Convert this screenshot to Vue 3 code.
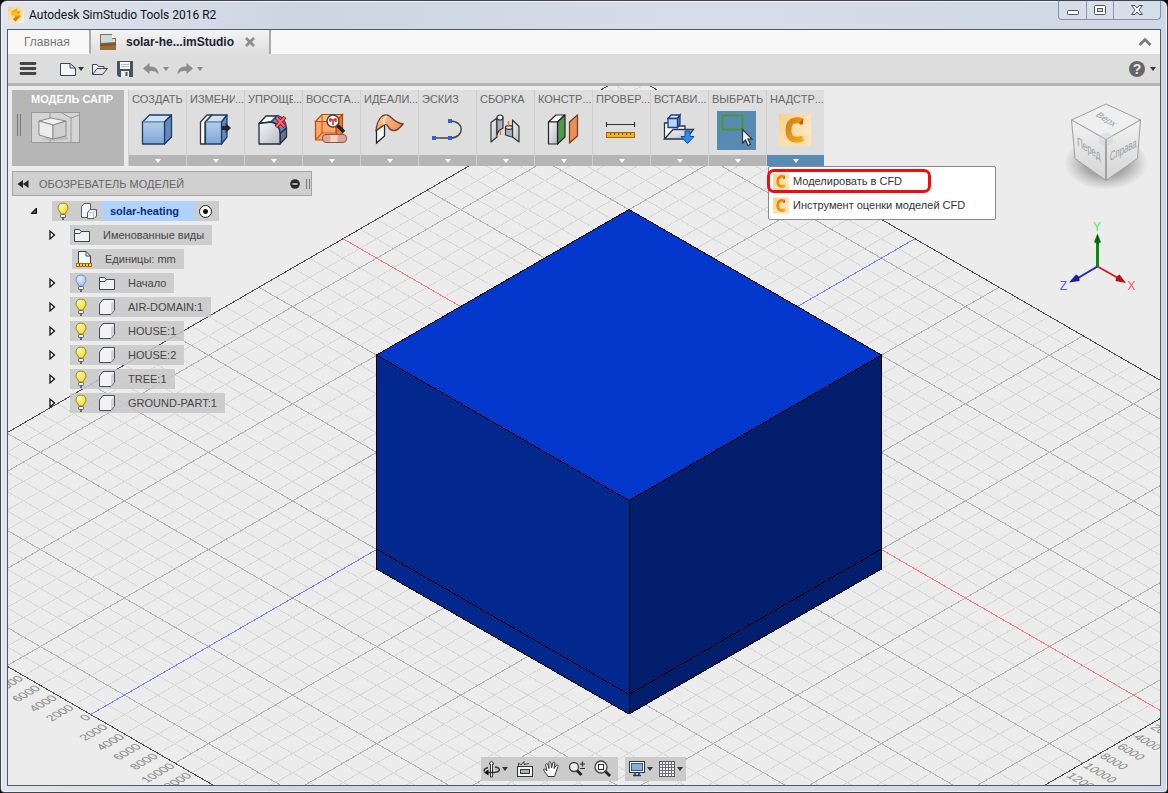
<template>
  <div class="window">
    <svg class="defs" width="0" height="0" aria-hidden="true">
      <defs>
        <linearGradient id="gBlue" x1="0" y1="0" x2="0" y2="1">
          <stop offset="0" stop-color="#b4cdea" />
          <stop offset="1" stop-color="#7fa7d8" />
        </linearGradient>
        <linearGradient id="gGrey" x1="0" y1="0" x2="1" y2="1">
          <stop offset="0" stop-color="#f6f7f9" />
          <stop offset="1" stop-color="#b4bac6" />
        </linearGradient>
        <linearGradient id="gOrange" x1="0" y1="0" x2="1" y2="1">
          <stop offset="0" stop-color="#ffc79c" />
          <stop offset="1" stop-color="#e98d55" />
        </linearGradient>
        <linearGradient id="gCfd" x1="0" y1="0" x2="1" y2="1">
          <stop offset="0" stop-color="#fbcf83" />
          <stop offset="1" stop-color="#fdf1dc" />
        </linearGradient>
        <linearGradient id="gC" x1="0" y1="0" x2="1" y2="1">
          <stop offset="0" stop-color="#d98218" />
          <stop offset="1" stop-color="#fba51c" />
        </linearGradient>
        <radialGradient id="gBulb" cx="40%" cy="35%">
          <stop offset="0" stop-color="#fffbd0" />
          <stop offset="1" stop-color="#ffe02e" />
        </radialGradient>
        <radialGradient id="gBulbOff" cx="40%" cy="35%">
          <stop offset="0" stop-color="#f2f7ff" />
          <stop offset="1" stop-color="#a9c8fa" />
        </radialGradient>
      </defs>
    </svg>

    <header class="titlebar">
      <svg class="logo" viewBox="0 0 16 16" v-html="icons.logo" />
      <h1>Autodesk SimStudio Tools 2016 R2</h1>
      <div class="winbtns">
        <button aria-label="Свернуть"><svg viewBox="0 0 14 14" v-html="icons.min" /></button>
        <button aria-label="Развернуть"><svg viewBox="0 0 14 14" v-html="icons.max" /></button>
        <button class="close" aria-label="Закрыть"><svg viewBox="0 0 14 14" v-html="icons.close" /></button>
      </div>
    </header>

    <div class="client">
      <nav class="tabs">
        <button class="tab">Главная</button>
        <div class="tab active">
          <svg class="doc" viewBox="0 0 16 16" v-html="icons.thumb" />
          <button class="name">solar-he...imStudio</button>
          <button class="x" aria-label="Закрыть вкладку"><svg viewBox="0 0 10 10"><path d="M1 1L9 9M9 1L1 9" stroke="#8b8b8b" stroke-width="2.6" /></svg></button>
        </div>
        <button class="collapse" aria-label="Скрыть ленту"><svg viewBox="0 0 14 10"><path d="M1.500 8L7 2.500L12.500 8" fill="none" stroke="#777" stroke-width="2.600" /></svg></button>
      </nav>

      <div class="quick">
        <button class="burger" aria-label="Меню"><svg viewBox="0 0 18 14"><path d="M2 1.500H16M2 6.500H16M2 11.500H16" stroke="#444" stroke-width="2.800" stroke-linecap="round" /></svg></button>
        <button class="drop" aria-label="Создать"><svg class="q" viewBox="0 0 18 18" v-html="icons.file" /><i class="caret" /></button>
        <button aria-label="Открыть"><svg class="q" viewBox="0 0 18 18" v-html="icons.open" /></button>
        <button class="save" aria-label="Сохранить"><svg class="q" viewBox="0 0 18 18" v-html="icons.save" /></button>
        <button class="drop off" aria-label="Отменить"><svg class="q" viewBox="0 0 18 18" v-html="icons.undo" /><i class="caret" /></button>
        <button class="drop off" aria-label="Повторить"><svg class="q" viewBox="0 0 18 18" v-html="icons.redo" /><i class="caret" /></button>
        <button class="drop help" aria-label="Справка"><b>?</b><i class="caret" /></button>
      </div>

      <main class="viewport">
        <svg class="scene" viewBox="8 86 1152 699" preserveAspectRatio="xMidYMid slice">
          <g shape-rendering="crispEdges">
            <path :d="minor" stroke="#d8d8d8" fill="none" />
            <path :d="major" stroke="#b2b2b2" fill="none" />
            <path :d="edge" stroke="#505050" fill="none" />
            <path :d="seg(-17, 0, 32, 0)" stroke="#f47c7c" />
            <path :d="seg(0, -17, 0, 32)" stroke="#8080f0" />
          </g>
          <g class="ticks">
            <text v-for="t in leftTicks" :key="'l' + t.n" :transform="t.m" text-anchor="end" x="-3" y="4">{{ t.label }}</text>
            <text v-for="t in rightTicks" :key="'r' + t.n" :transform="t.m" x="3" y="4">{{ t.label }}</text>
          </g>
          <g stroke="#000" stroke-linejoin="round" shape-rendering="crispEdges">
            <path d="M629 209.500L881.500 355L629 500.500L376.500 355Z" fill="#0438cc" />
            <path d="M376.500 355L629 500.500V714L376.500 569Z" fill="#03298f" />
            <path d="M881.500 355L629 500.500V714L881.500 569Z" fill="#021e6c" />
            <path d="M376.500 549L629 694.500L881.500 549" fill="none" />
          </g>
        </svg>

        <div class="ribbon">
          <button class="workspace">
            <span>МОДЕЛЬ САПР</span>
            <svg viewBox="0 0 49 31" v-html="icons.workspace" />
            <i class="grip" />
          </button>
          <div v-for="g in groups" :key="g.icon" class="group" :class="{ open: g.open }">
            <div class="caption"><span :class="{ cut: g.cut }">{{ g.word }}</span>{{ g.cut ? "..." : "" }}</div>
            <button class="cmd" :aria-label="g.word"><svg viewBox="0 0 32 32" v-html="icons[g.icon]" /></button>
            <button class="more" :aria-label="g.word + ' – меню'"><i /></button>
            <ul v-if="g.open" class="menu">
              <li v-for="(m, i) in menu" :key="m">
                <button :class="{ marked: i === 0 }"><svg viewBox="0 0 32 34" v-html="icons.cfd" />{{ m }}</button>
              </li>
            </ul>
          </div>
        </div>

        <aside class="browser">
          <div class="head">
            <svg class="back" viewBox="0 0 12 8"><path d="M6 0V8L0.500 4ZM11.500 0V8L6 4Z" fill="#222" /></svg>
            <h2>ОБОЗРЕВАТЕЛЬ МОДЕЛЕЙ</h2>
            <svg class="minus" viewBox="0 0 10 10"><circle cx="5" cy="5" r="4.800" fill="#2a2a2a" /><path d="M2.500 5H7.500" stroke="#ddd" stroke-width="1.500" /></svg>
            <i class="grip" />
          </div>
          <div class="node root">
            <svg class="tri" viewBox="0 0 8 8"><path d="M6.500 1V6.500H1Z" fill="#444" stroke="#000" /></svg>
            <div class="row">
              <svg class="bulb" viewBox="0 0 16 18" v-html="icons.bulb" />
              <svg class="ico" viewBox="0 0 18 18" v-html="icons.parts" />
              <strong>solar-heating</strong>
              <input type="radio" name="active" checked aria-label="solar-heating" />
            </div>
          </div>
          <div v-for="n in nodes" :key="n.text" class="node">
            <svg class="tri" viewBox="0 0 8 10"><path v-if="!n.leaf" d="M2 1V9L6.500 5Z" fill="#fff" stroke="#000" stroke-width="1.200" /></svg>
            <div class="row" :class="{ leaf: n.leaf }">
              <svg v-if="n.bulb" class="bulb" viewBox="0 0 16 18" v-html="icons[n.bulb]" />
              <svg class="ico" viewBox="0 0 18 18" v-html="icons[n.icon]" />
              <span>{{ n.text }}</span>
            </div>
          </div>
        </aside>

        <svg class="cube" viewBox="1055 90 100 210">
          <defs>
            <radialGradient id="gShade"><stop offset="0.500" stop-color="#888" stop-opacity="0.700" /><stop offset="1" stop-color="#999" stop-opacity="0" /></radialGradient>
            <linearGradient id="gFace" x1="0" y1="0" x2="0" y2="1"><stop offset="0" stop-color="#f2f2f2" /><stop offset="1" stop-color="#d4d4d4" /></linearGradient>
          </defs>
          <ellipse cx="1106" cy="163" rx="42" ry="27" fill="url(#gShade)" />
          <g stroke="#a0a0a0" stroke-linejoin="round">
            <path d="M1106 104L1140.500 120L1106 139.500L1071.500 120Z" fill="#efefef" />
            <path d="M1071.500 120L1106 139.500V180.500L1075 158.500Z" fill="url(#gFace)" />
            <path d="M1140.500 120L1106 139.500V180.500L1137.500 158.500Z" fill="url(#gFace)" />
          </g>
          <path d="M1106 132L1113 136V143L1106 147L1099 143V136Z" fill="#ccd2da" opacity="0.500" />
          <path d="M1106 139.500V180" stroke="#8a8a8a" />
          <g class="faces" text-anchor="middle">
            <text transform="matrix(0.620 0.380 -0.600 0.400 1104 121)">Верх</text>
            <text transform="matrix(0.600 0.380 0.060 1 1089 153)">Перед</text>
            <text transform="matrix(0.600 -0.320 -0.060 1 1123 154)">Справа</text>
          </g>
          <g stroke-width="2">
            <path d="M1097.500 266.500V242" stroke="#0a8a0a" stroke-width="3" />
            <path d="M1097.500 266.500L1118 278" stroke="#d62020" />
            <path d="M1097.500 266.500L1078 278" stroke="#2020c8" />
          </g>
          <path d="M1097.500 233.500L1101 242Q1097.500 245.500 1094 242Z" fill="#0a7a0a" />
          <path d="M1126 283L1115.500 281Q1116 276 1119.500 274.500Z" fill="#b80e0e" />
          <path d="M1069 282.500L1076 274.500Q1080 276 1079.500 281Z" fill="#1c1ca0" />
          <path d="M1097.500 235V244" stroke="#043c04" />
          <g class="axes" text-anchor="middle">
            <text x="1097" y="231" fill="#4df04d">Y</text>
            <text x="1131.500" y="290" fill="#ff5050">X</text>
            <text x="1063.500" y="290" fill="#5858e8">Z</text>
          </g>
        </svg>

        <div class="navbar">
          <div class="set">
            <button class="drop" aria-label="Орбита"><svg viewBox="0 0 18 18" v-html="icons.orbit" /><i class="caret" /></button>
            <button aria-label="Вид"><svg viewBox="0 0 18 18" v-html="icons.look" /></button>
            <button aria-label="Панорама"><svg viewBox="0 0 18 18" v-html="icons.hand" /></button>
            <button aria-label="Масштаб"><svg viewBox="0 0 18 18" v-html="icons.zoom" /></button>
            <button aria-label="Вписать"><svg viewBox="0 0 18 18" v-html="icons.fit" /></button>
          </div>
          <div class="set">
            <button class="drop" aria-label="Отображение"><svg viewBox="0 0 18 18" v-html="icons.monitor" /><i class="caret" /></button>
            <button class="drop" aria-label="Сетка"><svg viewBox="0 0 18 18" v-html="icons.grid" /><i class="caret" /></button>
          </div>
        </div>
      </main>
    </div>
  </div>
</template>

<script setup>
const icons = {
  logo: `<rect width="16" height="16" fill="url(#gCfd)"/><path d="M3 5L9 1.500V4L13 4.500L11 7.500L13 9L7.500 14.500L5 12L7 10.500V8.500L3 8Z" fill="#f59a0c"/><path d="M3 5L9 4V7L13 4.500L10 9L7 8.500L3 8Z" fill="#fcc21c"/><path d="M5 12L7 10.500L12 9L7.500 14.500Z" fill="#dd7a06"/>`,
  min: `<rect x="1.500" y="7.500" width="11" height="4" rx="1" fill="#fff" stroke="#4c5268"/>`,
  max: `<rect x="1.500" y="2.500" width="11" height="9" rx="1" fill="#fff" stroke="#4c5268"/><rect x="4.500" y="5.500" width="5" height="3" fill="#cfd8e6" stroke="#4c5268"/>`,
  close: `<path d="M1.500 2.500H5L7 5L9 2.500H12.500L9 7L12.500 11.500H9L7 9L5 11.500H1.500L5 7Z" fill="#fff" stroke="#4c5268"/>`,
  thumb: `<path d="M0 0H12L16 4V16H0Z" fill="#9a6a38"/><path d="M1 1H12V5H15V8L1 9Z" fill="#c4dde2"/><path d="M0 10L16 9V11L0 12Z" fill="#7d5128"/><path d="M12 0L16 4H12Z" fill="#fff"/>`,
  file: `<path d="M1.500 3.500H11L16.500 8V15.500H1.500Z" fill="#f3f5f8" stroke="#3f4650"/><path d="M11 3.500V8H16.500" fill="none" stroke="#3f4650"/>`,
  open: `<path d="M1.500 14.500V4.500H6L7.500 6.500H13V8.500" fill="#f3f5f8" stroke="#3f4650"/><path d="M1.500 14.500L6 8.500H16.500L11.500 14.500Z" fill="#e0e4ea" stroke="#3f4650"/>`,
  save: `<path d="M1 1H17V17H3L1 15Z" fill="#4a525e"/><rect x="4" y="2" width="10" height="7" fill="#f4f6f9"/><path d="M5 4.500H13M5 6.500H13" stroke="#b9bec7"/><rect x="5" y="11" width="8" height="6" fill="#e8ebf0"/><rect x="9.500" y="12" width="2" height="4" fill="#4a525e"/>`,
  undo: `<path d="M1 8.500L7.500 3V6.500C13.500 6.500 16.500 9 16.500 15C14.500 11.500 12 10.800 7.500 10.800V14Z" fill="#8c8c8c"/>`,
  redo: `<path d="M17 8.500L10.500 3V6.500C4.500 6.500 1.500 9 1.500 15C3.500 11.500 6 10.800 10.500 10.800V14Z" fill="#8c8c8c"/>`,
  workspace: `<rect x="0.500" y="0.500" width="48" height="30" fill="#d4d4d4" stroke="#989898"/><path d="M19 1V8M19 25V30M29 0L40 6L48 3M40 6V30" stroke="#999" fill="none"/><path d="M9 27L22 29L38 27L35 24Z" fill="#bdbdbd"/><path d="M8 9L20 6L35 9L22 13Z" fill="#f1f1f1" stroke="#8a8a8a"/><path d="M8 9L22 13V27L8 23Z" fill="#ececec" stroke="#8a8a8a"/><path d="M35 9L22 13V27L35 24Z" fill="#cfcfcf" stroke="#8a8a8a"/>`,
  create: `<g stroke="#1d3d6e" stroke-width="1.300" stroke-linejoin="round"><path d="M1.500 9L8.500 2H30.500L23.500 9Z" fill="#cfe1f1"/><path d="M23.500 9L30.500 2V24L23.500 31Z" fill="#6489bb"/><path d="M1.500 9H23.500V31H1.500Z" fill="url(#gBlue)"/></g><path d="M2.200 9H23" stroke="#cfe1f1"/>`,
  modify: `<g stroke-width="1.300" stroke-linejoin="round"><path d="M1.500 9L8 2H13L6 9V31H1.500Z" fill="#fff" stroke="#333"/><path d="M6.500 9L13 2H28L22.500 9Z" fill="#cfe1f1" stroke="#1d3d6e"/><path d="M22.500 9L28 2V24L22.500 31Z" fill="#6489bb" stroke="#1d3d6e"/><path d="M6.500 9H22.500V31H6.500Z" fill="url(#gBlue)" stroke="#1d3d6e"/></g><path d="M7.200 9H22" stroke="#cfe1f1"/><path d="M23 13H26.500V10L32 15L26.500 20V17H23Z" fill="#252525"/>`,
  simplify: `<g stroke-linejoin="round" stroke-width="1.300"><path d="M2 10.500L9 3H20L14 9Z" fill="#fff" stroke="#222d48"/><path d="M14 9L21 2.500C26 4 29 9 29.500 15L23 20.500C22 14 19 10 14 9Z" fill="#5d8bcb" stroke="#17479a"/><path d="M23 20.500L29.500 15V24L23 31Z" fill="#6b7484" stroke="#222d48"/><path d="M2 10.500L14 9C20 10 23 14 23 20.500V31H2Z" fill="url(#gGrey)" stroke="#222d48"/></g><path d="M19 4L28 14M28 4L19 14" stroke="#a51212" stroke-width="4"/><path d="M19.500 4.500L27.500 13.500M27.500 4.500L19.500 13.500" stroke="#ff6a5a" stroke-width="2"/>`,
  repair: `<g stroke="#b4480c" stroke-width="1.200"><path d="M0.500 8.500L7 1.500H27.500L21 8.500Z" fill="#ffc08c"/><path d="M21 8.500L27.500 1.500V20L21 27Z" fill="#ee7c32"/><path d="M0.500 8.500H21V27H0.500Z" fill="#ffa566"/><path d="M0.500 27L7 20V1.500M7 20H21" fill="none" stroke="#c96224"/></g><path d="M22 12L29 19" stroke="#222" stroke-width="3.500"/><circle cx="18" cy="8" r="6" fill="#fff" stroke="#444" stroke-width="1.500"/><path d="M14.500 5.500L18 7.500L21.500 5.500M18 7.500V12M15 9V6M21 9V6" stroke="#ee2010" stroke-width="1.600" fill="none"/><rect x="7.500" y="21.500" width="24" height="8" rx="3.500" fill="#dba69a" stroke="#8e5346"/><rect x="15.500" y="22" width="7" height="7" fill="#f2d3c8"/>`,
  idealize: `<path d="M3.500 17.500L11.500 11.500V23L3.500 30Z" fill="#fff" stroke="#222" stroke-width="1.300"/><path d="M3 17.500C4 8 8 1.500 14 2C19 2.500 19 9 30 11C27 15 24 18 20 17.500C14 17 16 10 11.500 11.500Z" fill="url(#gOrange)" stroke="#713c1e" stroke-width="1.300"/><path d="M14 3C11 5 10 8 11.500 11.500" fill="none" stroke="#fbe0cc" stroke-width="2"/>`,
  sketch: `<path d="M3 25H19C34 25 34 8 19 8" fill="none" stroke="#444" stroke-width="1.500"/><g fill="#2f64d0"><rect x="1" y="23" width="4" height="4"/><rect x="17" y="23" width="4" height="4"/><rect x="17" y="6" width="4" height="4"/></g>`,
  assembly: `<g stroke="#333" stroke-width="1.200" stroke-linejoin="round"><path d="M2 9.500L8 5V24L2 29Z" fill="url(#gGrey)"/><path d="M8 5V21.500L10 17.500L14 15V4.500Z" fill="#aab1be"/><ellipse cx="11" cy="4.500" rx="3" ry="2.500" fill="#eee"/><path d="M30 13.500L23.500 7V24L30 29Z" fill="url(#gGrey)"/><path d="M23.500 13V24L21 23.500L16.500 22V15Z" fill="#aab1be"/><ellipse cx="20" cy="14.500" rx="3.500" ry="1.800" fill="#eee"/></g><path d="M11.500 17V22M19.500 8V14" stroke="#f57a17" stroke-width="1.500"/>`,
  construct: `<g stroke="#222" stroke-width="1.200" stroke-linejoin="round"><path d="M1.500 9L9 2H18L10.500 9Z" fill="#fff"/><path d="M10.500 9L18 2V24L10.500 31Z" fill="#4f9b4c"/><path d="M1.500 9H10.500V31H1.500Z" fill="url(#gGrey)"/><path d="M22.500 9L30.500 2V23L22.500 30Z" fill="#e88f5a" stroke="#7c3812"/></g>`,
  measure: `<path d="M1.500 9V14M29.500 9V14M1.500 11.500H29.500" stroke="#333" stroke-width="1.200"/><rect x="1.500" y="19.500" width="28" height="5" fill="#f0b429" stroke="#a4680b"/><path d="M5.500 20V22M9.500 20V22M13.500 20V22M17.500 20V22M21.500 20V22M25.500 20V22" stroke="#704500"/>`,
  insert: `<path d="M1.500 26V10H6L8 13H22V17" fill="#fff" stroke="#2b3544" stroke-width="1.300"/><path d="M1.500 26L10 16.500H30.500L23 26Z" fill="url(#gGrey)" stroke="#2b3544" stroke-width="1.300"/><g stroke="#173f8f" stroke-width="1.300"><path d="M5 5.500L8 2H17L14.500 5.500Z" fill="#e3effb"/><path d="M14.500 5.500L17 2V11L14.500 14.500Z" fill="#5f88c5"/><path d="M5 5.500H14.500V14.500H5Z" fill="#bcd5f1"/></g><path d="M22 18H27V23.500H31L24.500 30.500L18 23.500H22Z" fill="#2590f2" stroke="#0d4e9a"/>`,
  select: `<rect x="-4" y="-2" width="39" height="39" fill="#588ab2"/><rect x="1.500" y="2.500" width="20" height="14" fill="none" stroke="#4c9c0c" stroke-width="1.600"/><path d="M21.500 16.500V30L24.500 27L27 32.500L29.500 31.300L27 26.200H31Z" fill="#f4f4f4" stroke="#2c3440" stroke-width="1.200"/>`,
  cfd: `<rect y="1" width="32" height="32" fill="url(#gCfd)"/><path d="M0 21L20 16L32 23V33H0Z" fill="#fcdda6" opacity="0.700"/><path d="M24 8.500C14 5 9.500 9 9.500 17S14 29 24 25.500" fill="none" stroke="url(#gC)" stroke-width="6"/><path d="M24 5.500V11.500L21 11.500L20 10.500Z" fill="#b8620d"/>`,
  bulb: `<path d="M8 1C4.500 1 3 3.500 3 6C3 8.500 5.500 9.500 5.500 12H10.500C10.500 9.500 13 8.500 13 6C13 3.500 11.500 1 8 1Z" fill="url(#gBulb)" stroke="#a78420"/><rect x="5.500" y="12.500" width="5" height="3" rx="1" fill="#eceef2" stroke="#62666e"/><path d="M7 17H9" stroke="#444" stroke-width="1.500"/>`,
  bulbOff: `<path d="M8 1C4.500 1 3 3.500 3 6C3 8.500 5.500 9.500 5.500 12H10.500C10.500 9.500 13 8.500 13 6C13 3.500 11.500 1 8 1Z" fill="url(#gBulbOff)" stroke="#6f8fc6"/><rect x="5.500" y="12.500" width="5" height="3" rx="1" fill="#eceef2" stroke="#62666e"/><path d="M7 17H9" stroke="#444" stroke-width="1.500"/>`,
  parts: `<path d="M1.500 4.500L4 1.500H10.500V15.500H1.500Z" fill="#f5f5f7" stroke="#555b66"/><path d="M7.500 10.500L10 7.500H16.500V14L14 16.500H7.500Z" fill="#f5f5f7" stroke="#555b66"/><path d="M8 10.500H13.500L16 8M13.500 10.500V16" fill="none" stroke="#c4c7ce"/>`,
  folder: `<path d="M1.500 15.500V3.500H6.500L8 5.500H16.500V15.500Z" fill="#f0f1f4" stroke="#3f4650"/><path d="M1.500 7.500H7L8.500 5.500" fill="none" stroke="#3f4650"/>`,
  units: `<path d="M3.500 13.500V1.500H11L15.500 6V13.500Z" fill="#f6f7f9" stroke="#3f4650"/><path d="M11 1.500V6H15.500" fill="none" stroke="#3f4650"/><rect x="1.500" y="13.500" width="15" height="3" fill="#fcd04a" stroke="#b36a07"/><path d="M4.500 14V16M7.500 14V16M10.500 14V16M13.500 14V16" stroke="#6e4200"/>`,
  body: `<path d="M1.500 6L5 1.500H16.500V12.500L13 16.500H1.500Z" fill="#f2f2f5" stroke="#4a505b" stroke-linejoin="round"/><path d="M13 6L16 2.500V12.500L13 16Z" fill="#d2d4da"/>`,
  orbit: `<path d="M8.500 1L11 4H9.500V17H7.500V4H6Z" fill="#fff" stroke="#333"/><path d="M12 7C18 8 18 12 11 12.500H4M5 7.500C1.500 8.500 0.500 10 1.500 11.500" fill="none" stroke="#333" stroke-width="1.400"/><path d="M1 12.500L5.500 9.500V15.500Z" fill="#111"/>`,
  look: `<path d="M2.500 7V3L5 5L8 1.500V4.500L13 3.500" fill="none" stroke="#444"/><rect x="1.500" y="6.500" width="15" height="10" fill="#f4f4f4" stroke="#333"/><rect x="4.500" y="9.500" width="9" height="4" fill="#aab2bd" stroke="#333"/>`,
  hand: `<path d="M6 16.500C4.500 14 2.500 12 1.500 9.500C2.500 8.300 4 9.500 5 11L3.500 4.500C4.500 3 5.500 4 6 5L7 8.500L6.800 2.500C7.800 1 8.800 2 9 3L9.500 8L11 2.500C12 1.500 13 2.500 12.800 4L12 8.500L14.500 5C15.500 4.500 16.500 5.500 16 6.500L14 12L12.500 16.500Z" fill="#fff" stroke="#333"/>`,
  zoom: `<circle cx="6" cy="7" r="4.500" fill="#e5f0f4" stroke="#444" stroke-width="1.300"/><path d="M9 10.500L13.500 15" stroke="#222" stroke-width="2.800"/><path d="M12 4H17M14.500 1.500V6.500M12 8.500H17" stroke="#333" stroke-width="1.200"/>`,
  fit: `<circle cx="7" cy="7" r="6" fill="#e6ebee" stroke="#444" stroke-width="1.300"/><rect x="4.500" y="4.500" width="5" height="5" fill="#fff" stroke="#333"/><path d="M11.500 11.500L16 16" stroke="#222" stroke-width="2.800"/>`,
  monitor: `<rect x="1.500" y="1.500" width="15" height="11" fill="#fff" stroke="#2b3544"/><rect x="3.500" y="3.500" width="11" height="7" fill="#86aede" stroke="#35598f"/><path d="M7 13V15M11 13V15M5 15.500H13" stroke="#2b3544" stroke-width="1.500"/>`,
  grid: `<rect x="1.500" y="1.500" width="15" height="15" fill="#f3f3f5" stroke="#555"/><path d="M4.500 1V17M7.500 1V17M10.500 1V17M13.500 1V17M1 4.500H17M1 7.500H17M1 10.500H17M1 13.500H17" stroke="#666c78"/>`
};

const groups = [
  { word: "СОЗДАТЬ", icon: "create" },
  { word: "ИЗМЕНИ", icon: "modify", cut: true },
  { word: "УПРОЩЕ", icon: "simplify", cut: true },
  { word: "ВОССТА", icon: "repair", cut: true },
  { word: "ИДЕАЛИ", icon: "idealize", cut: true },
  { word: "ЭСКИЗ", icon: "sketch" },
  { word: "СБОРКА", icon: "assembly" },
  { word: "КОНСТР", icon: "construct", cut: true },
  { word: "ПРОВЕР", icon: "measure", cut: true },
  { word: "ВСТАВИ", icon: "insert", cut: true },
  { word: "ВЫБРАТЬ", icon: "select" },
  { word: "НАДСТР", icon: "cfd", cut: true, open: true }
];

const menu = ["Моделировать в CFD", "Инструмент оценки моделей CFD"];

const nodes = [
  { text: "Именованные виды", icon: "folder" },
  { text: "Единицы: mm", icon: "units", leaf: true },
  { text: "Начало", icon: "folder", bulb: "bulbOff" },
  { text: "AIR-DOMAIN:1", icon: "body", bulb: "bulb" },
  { text: "HOUSE:1", icon: "body", bulb: "bulb" },
  { text: "HOUSE:2", icon: "body", bulb: "bulb" },
  { text: "TREE:1", icon: "body", bulb: "bulb" },
  { text: "GROUND-PART:1", icon: "body", bulb: "bulb" }
];

// isometric ground plane: a runs down-right, b runs down-left, one cell = 2000 mm
const LO = -17;
const HI = 32;
const pt = (a, b) => [629 + 16.82 * (a - b), 403.8 + 9.71 * (a + b)];
const seg = (a1, b1, a2, b2) => `M${pt(a1, b1).join(" ")}L${pt(a2, b2).join(" ")}`;

const lines = (test) => {
  let d = "";
  for (let i = LO + 1; i < HI; i++) {
    if (test(i)) d += seg(i, LO, i, HI) + seg(LO, i, HI, i);
  }
  return d;
};
const minor = lines((i) => i % 5 !== 0);
const major = lines((i) => i % 5 === 0 && i !== 0);
const edge = seg(LO, LO, HI, LO) + seg(LO, LO, LO, HI) + seg(LO, HI, HI, HI) + seg(HI, LO, HI, HI);

const ticks = (from, to, at, plane) => {
  const out = [];
  for (let n = from; n <= to; n++) {
    const [x, y] = at(n);
    out.push({ n, label: Math.abs(n) * 2000, m: `matrix(${plane} ${x} ${y})` });
  }
  return out;
};
const leftTicks = ticks(-4, 6, (n) => pt(n, HI), "0.866 -0.5 0.866 0.5");
const rightTicks = ticks(1, 6, (n) => pt(HI, n), "0.866 0.5 -0.866 0.5");
</script>

<style>
html, body { margin: 0; background: #000; }
</style>

<style scoped>
.window { display: flex; flex-direction: column; min-height: 100vh; box-sizing: border-box; border: 1px solid #41444e; border-radius: 7px 7px 4px 4px; padding: 0 6px 6px; background: linear-gradient(90deg, #dfe5ee, #ccd6e3 25%, #d4dde8 60%, #cfd8e6); box-shadow: inset 0 0 0 1px #eef2f7; font: 11px "Liberation Sans", Arial, sans-serif; color: #444; }
.defs { position: absolute; }
button { border: 0; padding: 0; background: none; font: inherit; color: inherit; }
svg { display: block; flex: none; overflow: visible; }

.titlebar { display: flex; align-items: center; height: 28px; }
.logo { width: 16px; height: 16px; margin-left: 1px; }
h1 { flex: 1; margin: 0 0 0 5px; font: 12px Roboto, "Open Sans", sans-serif; color: #111; }
.winbtns { display: flex; align-self: flex-start; height: 18px; border: 1px solid #8a92a3; border-top: 0; border-radius: 0 0 4px 4px; background: #d6deea; }
.winbtns button { display: flex; align-items: center; justify-content: center; width: 27px; border-left: 1px solid #8a92a3; }
.winbtns button:first-child { border: 0; }
.winbtns .close { width: 47px; }
.winbtns svg { width: 14px; height: 14px; }

.client { flex: 1; display: flex; flex-direction: column; border: 1px solid #555963; background: #ececec; }
.tabs { display: flex; height: 24px; background: #f8f8f8; }
.tab { display: flex; align-items: center; box-sizing: border-box; border-right: 2px solid #aaa; }
button.tab { width: 83px; padding-left: 16px; font-size: 12px; color: #777; border-bottom: 1px solid #fff; }
.tab.active { width: 180px; padding-left: 9px; background: linear-gradient(#f4f4f4, #dedede); }
.doc { width: 16px; height: 16px; }
.name { margin-left: 10px; font-size: 12px; font-weight: bold; color: #1c2233; }
.x { margin-left: 11px; }
.x svg { width: 10px; height: 10px; }
.collapse { margin: 0 8px 0 auto; }
.collapse svg { width: 14px; height: 10px; }

.quick { display: flex; align-items: center; gap: 7px; height: 29px; padding: 0 4px 0 11px; border-bottom: 3px solid #b4b4b4; background: #ddd; }
.burger svg { width: 18px; height: 14px; }
.burger { margin-right: 15px; }
.save { margin-right: 1px; }
.q { width: 18px; height: 18px; }
.drop { display: flex; align-items: center; }
.caret { width: 0; height: 0; margin-left: 1px; border: 3px solid transparent; border-top: 4px solid #333; border-bottom: 0; }
.off .caret { margin-left: 3px; border-top-color: #888; }
.help { margin-left: auto; }
.help b { width: 16px; height: 16px; border-radius: 8px; background: #666; color: #e8e8e8; font-size: 14px; line-height: 16px; }
.help .caret { margin-left: 5px; }

.viewport { position: relative; flex: 1; display: flex; flex-direction: column; align-items: flex-start; overflow: hidden; padding: 4px; box-sizing: border-box; }
.scene { position: absolute; left: 0; top: 0; width: 100%; height: 100%; overflow: hidden; }
.ticks { font-size: 12px; fill: #888; }

.ribbon { position: relative; display: flex; height: 76px; }
.workspace { position: relative; width: 112px; margin-right: 4px; padding: 3px 0 0 19px; display: flex; flex-direction: column; align-items: flex-start; background: #b6b6b6; color: #fff; font-weight: bold; line-height: 12px; }
.workspace svg { width: 49px; height: 31px; margin-top: 7px; }
.grip { width: 2px; border: 1px solid #777; border-width: 0 1px; }
.workspace .grip { position: absolute; left: 5px; top: 24px; height: 22px; }
.group { position: relative; display: flex; flex-direction: column; align-items: flex-start; width: 57px; border-left: 1px solid #cecece; background: #dedede; }
.caption { display: flex; padding: 3px 0 0 3px; line-height: 12px; color: #666; white-space: nowrap; }
.cut { max-width: 45px; overflow: hidden; }
.cmd { flex: 1; margin-left: 12px; padding-bottom: 2px; }
.cmd svg { width: 32px; height: 32px; }
.more { display: flex; align-items: center; justify-content: center; align-self: stretch; height: 11px; background: #b5b5b5; }
.more i { border: 3px solid transparent; border-top: 4px solid #fff; border-bottom: 0; }
.open .more { background: #588ab2; }
.menu { position: absolute; z-index: 2; left: 1px; top: 76px; width: 226px; margin: 0; padding: 2px 0; list-style: none; background: #fff; border: 1px solid #8a8a8a; border-radius: 2px; }
.menu button { display: flex; align-items: center; gap: 4px; height: 24px; padding: 0 26px 0 3px; border: 3px solid transparent; margin-left: -2px; color: #333; white-space: nowrap; }
.menu svg { width: 16px; height: 17px; }
.menu .marked { border-color: #f20c0c; border-radius: 7px; }

.browser { position: relative; margin-top: 5px; }
.head { display: flex; align-items: center; width: 300px; height: 25px; box-sizing: border-box; padding: 0 1px 0 4px; border: 1px solid #a4a4a4; background: #d0d0d0; }
.back { width: 12px; height: 8px; }
h2 { flex: 1; margin: 0 0 0 10px; font-size: 11px; font-weight: normal; color: #666; }
.minus { width: 10px; height: 10px; margin-right: 6px; }
.head .grip { height: 10px; }
.node { display: flex; align-items: center; height: 20px; margin-top: 4px; padding-left: 36px; }
.node.root { margin-top: 5px; padding-left: 18px; }
.tri { width: 8px; height: 10px; margin-right: 14px; }
.row { display: flex; align-items: center; height: 20px; padding: 0 8px 0 3px; background: rgba(200, 200, 200, 0.85); color: #444; }
.bulb { width: 16px; height: 18px; margin-right: 9px; }
.ico { width: 18px; height: 18px; margin-right: 12px; }
.leaf { margin-left: 2px; }
.root .row { padding-right: 7px; }
.root .ico { margin-right: 4px; }
.root strong { padding: 0 16px 0 8px; line-height: 20px; background: #b0d2ff; color: #0a2f78; }
.root input { appearance: none; width: 13px; height: 13px; margin: 0 0 0 4px; border: 1px solid #222; border-radius: 50%; background: radial-gradient(circle, #111 0 2px, #fff 3px); }

.cube { position: absolute; right: 5px; top: 4px; width: 100px; height: 210px; }
.faces { font-size: 13px; fill: #999da5; }
.axes { font-size: 12px; }

.navbar { position: absolute; left: 0; right: 0; bottom: 4px; display: flex; justify-content: center; gap: 7px; padding-right: 2px; }
.set { display: flex; align-items: center; gap: 8px; height: 24px; padding: 0 6px 0 2px; background: #cbcbcb; }
.set + .set { padding: 0 3px; gap: 5px; }
.set svg { width: 18px; height: 18px; }
</style>
